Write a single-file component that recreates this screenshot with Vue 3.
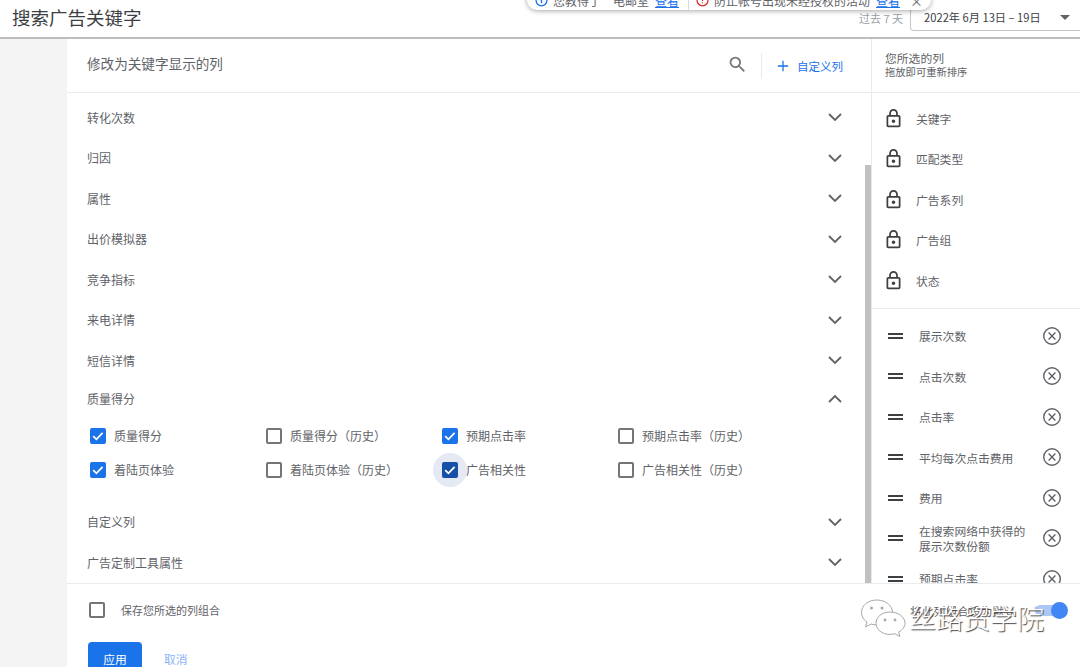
<script setup>
const sections = ['转化次数', '归因', '属性', '出价模拟器', '竞争指标', '来电详情', '短信详情']
const quality = [
  { label: '质量得分', checked: true },
  { label: '质量得分（历史）', checked: false },
  { label: '预期点击率', checked: true },
  { label: '预期点击率（历史）', checked: false },
  { label: '着陆页体验', checked: true },
  { label: '着陆页体验（历史）', checked: false },
  { label: '广告相关性', checked: true, focused: true },
  { label: '广告相关性（历史）', checked: false }
]
const lastSections = ['自定义列', '广告定制工具属性']
const locked = ['关键字', '匹配类型', '广告系列', '广告组', '状态']
const selected = [
  '展示次数',
  '点击次数',
  '点击率',
  '平均每次点击费用',
  '费用',
  '在搜索网络中获得的展示次数份额',
  '预期点击率'
]
</script>

<template>
  <div class="page">
    <header class="top-bar">
      <h1 class="page-title">搜索广告关键字</h1>
      <div class="date-area">
        <span class="date-hint">过去 7 天</span>
        <div class="date-box">
          <span>2022年 6月 13日 – 19日</span>
          <span class="date-arrow"></span>
        </div>
      </div>
      <div class="notice">
        <svg class="notice-icon" viewBox="0 0 24 24" fill="none" stroke="#1a73e8" stroke-width="2.4">
          <circle cx="12" cy="12" r="10" />
          <path d="M12 11v6M12 7v2" />
        </svg>
        <span class="notice-text notice-one">您教得了　电邮室</span>
        <a class="notice-link">查看</a>
        <span class="notice-sep"></span>
        <svg class="notice-icon" viewBox="0 0 24 24" fill="none" stroke="#d93025" stroke-width="2.4">
          <circle cx="12" cy="12" r="10" />
          <path d="M12 7v6M12 15v2" />
        </svg>
        <span class="notice-text">防止帐号出现未经授权的活动</span>
        <a class="notice-link">查看</a>
        <span class="notice-close">×</span>
      </div>
    </header>

    <div class="content">
      <div class="gutter"></div>
      <div class="editor">
        <div class="editor-top">
          <section class="columns">
            <div class="columns-head">
              <span class="columns-title">修改为关键字显示的列</span>
              <svg class="search-icon" viewBox="0 0 24 24" fill="#757575">
                <path d="M15.5 14h-.79l-.28-.27A6.47 6.47 0 0 0 16 9.5 6.5 6.5 0 1 0 9.5 16c1.61 0 3.09-.59 4.23-1.57l.27.28v.79l5 4.99L20.49 19l-4.99-5zm-6 0C7.01 14 5 11.99 5 9.5S7.01 5 9.5 5 14 7.01 14 9.5 11.99 14 9.5 14z" />
              </svg>
              <span class="head-sep"></span>
              <svg class="plus-icon" viewBox="0 0 14 14" stroke="#1a73e8" stroke-width="1.5">
                <path d="M7 1v12M1 7h12" />
              </svg>
              <span class="custom-link">自定义列</span>
            </div>

            <div class="columns-body">
              <div class="sections">
                <div class="section-row" v-for="s in sections" :key="s">
                  <span>{{ s }}</span>
                  <svg class="chevron" viewBox="0 0 16 10" fill="none" stroke="#5f6368" stroke-width="1.8">
                    <path d="M2 2l6 6 6-6" />
                  </svg>
                </div>
                <div class="section-row quality-row">
                  <span>质量得分</span>
                  <svg class="chevron" viewBox="0 0 16 10" fill="none" stroke="#5f6368" stroke-width="1.8">
                    <path d="M2 8l6-6 6 6" />
                  </svg>
                </div>
                <div class="check-grid">
                  <label class="check-item" v-for="q in quality" :key="q.label">
                    <span class="check-wrap" :class="{ focused: q.focused }">
                      <span class="check" :class="{ on: q.checked }">
                        <svg v-if="q.checked" viewBox="0 0 16 16" fill="none" stroke="#fff" stroke-width="1.8">
                          <path d="M3.2 8.2l3.2 3.1 6.2-6.4" />
                        </svg>
                      </span>
                    </span>
                    <span>{{ q.label }}</span>
                  </label>
                </div>
                <div class="section-row" v-for="s in lastSections" :key="s">
                  <span>{{ s }}</span>
                  <svg class="chevron" viewBox="0 0 16 10" fill="none" stroke="#5f6368" stroke-width="1.8">
                    <path d="M2 2l6 6 6-6" />
                  </svg>
                </div>
              </div>
              <div class="scroll-track"><div class="scroll-thumb"></div></div>
            </div>
          </section>

          <aside class="chosen">
            <div class="chosen-head">
              <div class="chosen-title">您所选的列</div>
              <div class="chosen-hint">拖放即可重新排序</div>
            </div>
            <div class="locked-list">
              <div class="locked-row" v-for="l in locked" :key="l">
                <svg class="lock-icon" viewBox="0 0 24 24" fill="#3c4043">
                  <path d="M18 8h-1V6c0-2.76-2.24-5-5-5S7 3.24 7 6v2H6c-1.1 0-2 .9-2 2v10c0 1.1.9 2 2 2h12c1.1 0 2-.9 2-2V10c0-1.1-.9-2-2-2zM9 6c0-1.66 1.34-3 3-3s3 1.34 3 3v2H9V6zm9 14H6V10h12v10zm-6-3c1.1 0 2-.9 2-2s-.9-2-2-2-2 .9-2 2 .9 2 2 2z" />
                </svg>
                <span>{{ l }}</span>
              </div>
            </div>
            <div class="selected-list">
              <div class="selected-row" v-for="c in selected" :key="c">
                <span class="drag-handle"></span>
                <span class="selected-name">{{ c }}</span>
                <svg class="remove-icon" viewBox="0 0 20 20" fill="none" stroke="#5f6368" stroke-width="1.4">
                  <circle cx="10" cy="10" r="8.3" />
                  <path d="M6.6 6.6l6.8 6.8M13.4 6.6l-6.8 6.8" />
                </svg>
              </div>
            </div>
          </aside>
        </div>

        <footer class="editor-foot">
          <div class="save-row">
            <span class="check"></span>
            <span class="save-label">保存您所选的列组合</span>
            <span class="default-label">将此列组合设为默认</span>
            <span class="toggle"><span class="toggle-knob"></span></span>
          </div>
          <div class="actions">
            <button class="apply-button">应用</button>
            <a class="cancel-link">取消</a>
          </div>
        </footer>
      </div>
    </div>

    <!-- watermark of the account that shared the screenshot -->
    <div class="watermark">
      <svg class="wechat" viewBox="0 0 46 40">
        <path d="M17 2C8 2 1.500 7.500 1.500 14.500c0 4 2.200 7.400 5.600 9.700L5.500 29l5.500-3c2 .6 4 .9 6 .9 8.500 0 15.500-5.500 15.500-12.400S25.500 2 17 2z" fill="#fff" stroke="#a8a8a8" stroke-width="1" />
        <circle cx="11.500" cy="10" r="1.500" fill="#a8a8a8" />
        <circle cx="22" cy="10" r="1.500" fill="#a8a8a8" />
        <path d="M30 14c-8 0-14 5-14 11.200s6 11.200 14 11.200c1.700 0 3.300-.2 4.800-.7L40 38.500l-1.300-4.500c3.800-2 6.300-5.200 6.300-8.800C45 19 38 14 30 14z" fill="#fff" stroke="#a8a8a8" stroke-width="1" />
        <circle cx="25" cy="22" r="1.400" fill="#a8a8a8" />
        <circle cx="35" cy="22" r="1.400" fill="#a8a8a8" />
      </svg>
      <span class="watermark-text">丝路贸学院</span>
    </div>
  </div>
</template>

<style>
html,
body {
  margin: 0;
  overflow: hidden;
}
</style>

<style scoped>
.page {
  position: relative;
  width: 1080px;
  height: 667px;
  overflow: hidden;
  display: flex;
  flex-direction: column;
  background: #fff;
  font-family: "Noto Sans CJK SC", "Liberation Sans", sans-serif;
  color: #5f6368;
  font-size: 11.8px;
}

.top-bar {
  position: relative;
  height: 37px;
  flex: none;
  display: flex;
  align-items: flex-start;
  justify-content: space-between;
  background: #fff;
  border-bottom: 2px solid #bdbdbd;
  box-sizing: content-box;
}

.page-title {
  margin: 3px 0 0 12px;
  font-size: 18.5px;
  line-height: 28px;
  font-weight: 400;
  color: #3c4043;
}

.date-area {
  display: flex;
  align-items: center;
  margin-top: 4px;
}

.date-hint {
  color: #9aa0a6;
  font-size: 11px;
  margin-right: 7px;
}

.date-box {
  width: 170px;
  height: 27px;
  box-sizing: border-box;
  display: flex;
  align-items: center;
  justify-content: space-between;
  padding: 0 10px 0 13px;
  border-left: 1px solid #c4c7c5;
  border-bottom: 1px solid #c4c7c5;
  border-bottom-left-radius: 4px;
  color: #3c4043;
  font-size: 11.2px;
}

.date-arrow {
  width: 0;
  height: 0;
  border-left: 5px solid transparent;
  border-right: 5px solid transparent;
  border-top: 5px solid #5f6368;
}

.notice {
  position: absolute;
  left: 527px;
  top: -10px;
  width: 404px;
  height: 20px;
  box-sizing: border-box;
  display: flex;
  align-items: center;
  padding: 0 0 0 8px;
  background: #fff;
  border-radius: 0 0 10px 10px;
  box-shadow: 0 1px 5px rgba(0, 0, 0, 0.35);
  font-size: 12px;
  white-space: nowrap;
}

.notice-icon {
  width: 13px;
  height: 13px;
  flex: none;
  margin-right: 5px;
}

.notice-text {
  color: #5f6368;
}

.notice-one {
  width: 96px;
}

.notice-link {
  color: #1a73e8;
  margin-left: 6px;
  text-decoration: underline;
}

.notice-sep {
  width: 1px;
  height: 20px;
  background: #dadce0;
  margin: 0 7px 0 9px;
}

.notice-close {
  margin-left: 10px;
  font-size: 13px;
}

.content {
  flex: 1;
  min-height: 0;
  display: flex;
}

.gutter {
  width: 67px;
  flex: none;
  background: #f4f4f4;
}

.editor {
  flex: 1;
  min-width: 0;
  display: flex;
  flex-direction: column;
}

.editor-top {
  height: 544px;
  flex: none;
  display: flex;
  overflow: hidden;
}

.columns {
  width: 805px;
  flex: none;
  display: flex;
  flex-direction: column;
  border-right: 1px solid #e8eaed;
  box-sizing: border-box;
}

.columns-head {
  height: 54px;
  flex: none;
  box-sizing: border-box;
  display: flex;
  align-items: center;
  padding: 0 28px 0 20px;
  border-bottom: 1px solid #e8eaed;
}

.columns-title {
  flex: 1;
  margin-bottom: 6px;
  font-size: 13.6px;
}

.search-icon {
  width: 21px;
  height: 21px;
  margin-bottom: 2px;
}

.head-sep {
  width: 1px;
  height: 26px;
  margin: 0 15px 0 13px;
  background: #e8eaed;
}

.plus-icon {
  width: 12px;
  height: 12px;
  margin-right: 8px;
}

.custom-link {
  color: #1a73e8;
  font-size: 11.5px;
}

.columns-body {
  flex: 1;
  min-height: 0;
  display: flex;
}

.sections {
  flex: 1;
  min-width: 0;
  overflow: hidden;
  padding-top: 4px;
}

.section-row {
  height: 40.500px;
  display: flex;
  align-items: center;
  justify-content: space-between;
  padding: 0 22px 0 20px;
  font-size: 12px;
}

.quality-row {
  height: 36px;
}

.chevron {
  width: 16px;
  height: 10px;
}

.check-grid {
  display: grid;
  grid-template-columns: repeat(4, 176px);
  grid-auto-rows: 34px;
  padding: 2px 0 15px 23px;
  font-size: 12px;
}

.check-item {
  display: flex;
  align-items: center;
  gap: 8px;
}

.check-wrap {
  width: 16px;
  height: 16px;
  display: flex;
  border-radius: 50%;
}

.check-wrap.focused {
  background: #e4e9f4;
  box-shadow: 0 0 0 9px #e4e9f4;
}

.check {
  display: block;
  width: 16px;
  height: 16px;
  flex: none;
  box-sizing: border-box;
  border: 2px solid #757575;
  border-radius: 2px;
}

.check.on {
  background: #1a73e8;
  border: none;
}

.focused .check.on {
  background: #174ea6;
}

.check svg {
  display: block;
  width: 16px;
  height: 16px;
}

.scroll-track {
  width: 6px;
  flex: none;
}

.scroll-thumb {
  margin-top: 72px;
  height: 420px;
  background: #c1c1c1;
}

.chosen {
  flex: 1;
  min-width: 0;
  overflow: hidden;
}

.chosen-head {
  height: 54px;
  box-sizing: border-box;
  padding: 12px 0 0 13px;
  border-bottom: 1px solid #e8eaed;
}

.chosen-title {
  font-size: 11.8px;
  line-height: 14px;
}

.chosen-hint {
  font-size: 10.3px;
  line-height: 14px;
}

.locked-list {
  padding: 5px 0 7px;
  border-bottom: 1px solid #e8eaed;
}

.locked-row {
  height: 40.500px;
  display: flex;
  align-items: center;
  gap: 12px;
  padding-left: 11px;
}

.lock-icon {
  width: 21px;
  height: 21px;
  flex: none;
}

.selected-list {
  padding-top: 7px;
}

.selected-row {
  height: 40.500px;
  display: flex;
  align-items: center;
  padding: 0 18px 0 16px;
  line-height: 15px;
}

.drag-handle {
  width: 15px;
  height: 6px;
  flex: none;
  box-sizing: border-box;
  border-top: 2px solid #3c4043;
  border-bottom: 2px solid #3c4043;
  margin-right: 16px;
}

.selected-name {
  flex: 1;
  min-width: 0;
  max-width: 110px;
}

.remove-icon {
  width: 20px;
  height: 20px;
  flex: none;
  margin-left: auto;
}

.editor-foot {
  flex: 1;
  border-top: 1px solid #e8eaed;
  box-sizing: border-box;
}

.save-row {
  display: flex;
  align-items: center;
  height: 52px;
  padding-left: 22px;
  font-size: 11px;
}

.save-label {
  margin-left: 16px;
  width: 789px;
  flex: none;
  white-space: nowrap;
}

.default-label {
  width: 125px;
  flex: none;
  font-size: 11.8px;
  white-space: nowrap;
}

.toggle {
  position: relative;
  width: 28px;
  height: 11px;
  flex: none;
  border-radius: 6px;
  background: #a9c7f7;
}

.toggle-knob {
  position: absolute;
  right: -5px;
  top: -3px;
  width: 17px;
  height: 17px;
  border-radius: 50%;
  background: #4285f4;
}

.actions {
  display: flex;
  align-items: center;
  padding: 6px 0 0 21px;
}

.apply-button {
  width: 54px;
  height: 36px;
  padding: 0 0 4px;
  border: none;
  border-radius: 4px;
  background: #1a73e8;
  color: #fff;
  font-family: inherit;
  font-size: 11.8px;
}

.cancel-link {
  margin: 0 0 4px 22px;
  color: #8ab4f8;
  font-size: 11.8px;
}

.watermark {
  position: absolute;
  left: 860px;
  top: 598px;
  display: flex;
  align-items: center;
}

.wechat {
  width: 46px;
  height: 40px;
  flex: none;
}

.watermark-text {
  margin-left: 3px;
  font-size: 27px;
  line-height: 40px;
  font-weight: 300;
  color: #fff;
  white-space: nowrap;
  text-shadow: 1px 1px 1px #444;
}
</style>
